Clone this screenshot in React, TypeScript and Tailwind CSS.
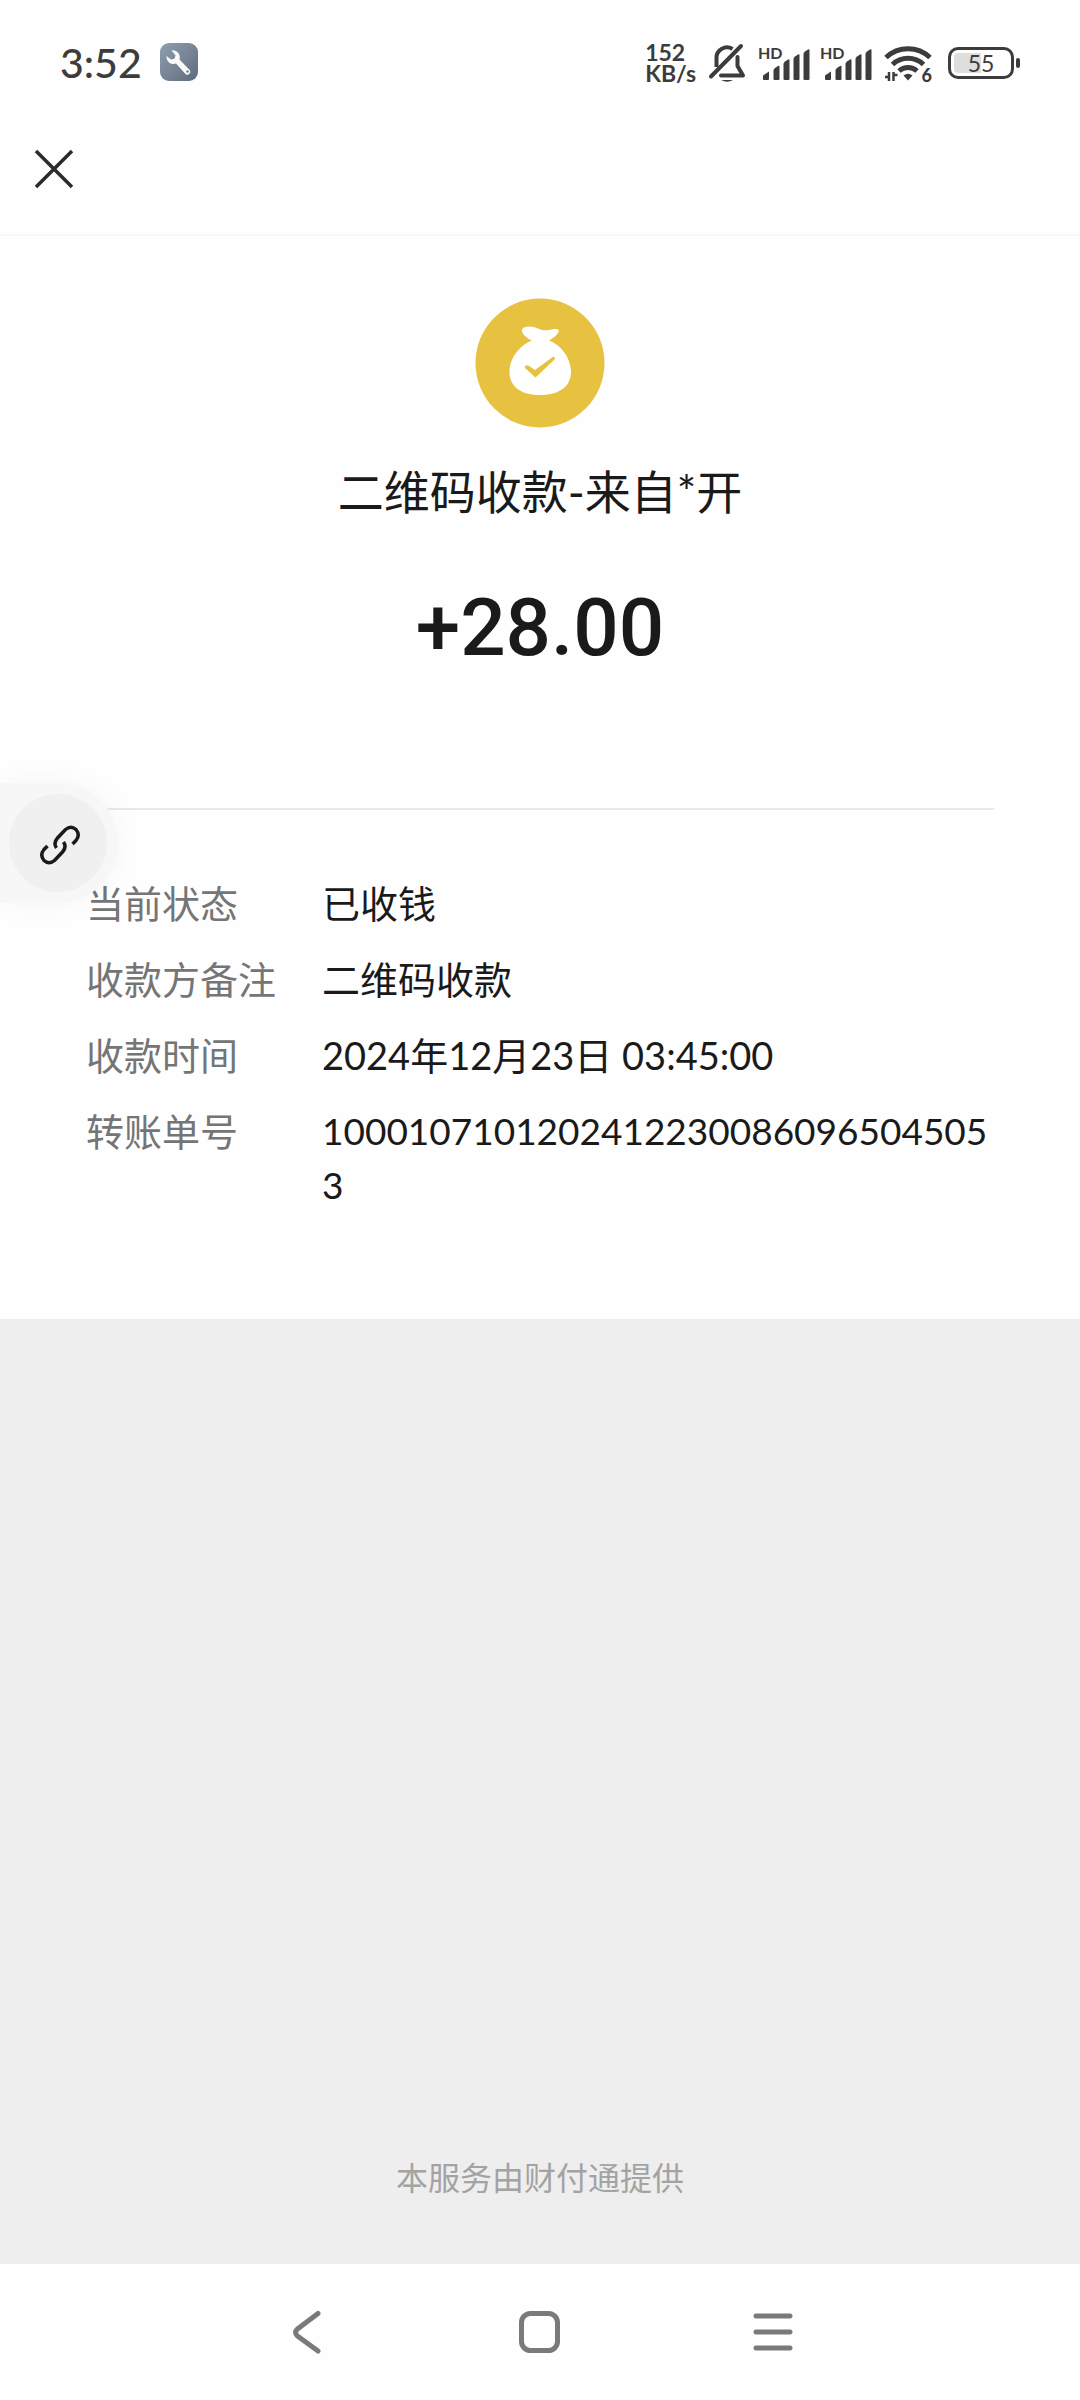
function SignalBars() {
  return (
    <div className="relative">
      <span className="absolute -top-px left-0 text-base leading-none font-bold">HD</span>
      <svg width="52" height="34" viewBox="1 0 52 34" fill="currentColor">
        <path d="M6 33v-3.500l6-4v7.500q0 1-1 1h-4q-1 0-1-1z" />
        <path d="M16.500 33v-8.500q0-1.500 1.500-2.500l3-2q1.500-.5 1.500 .5v12.500q0 1-1 1h-4q-1 0-1-1z" />
        <path d="M26.500 33v-15q0-1.500 1.500-2.500l3-2q1.500-.5 1.500 .5v19q0 1-1 1h-4q-1 0-1-1z" />
        <path d="M36.500 33v-20q0-1.500 1.500-2.500l3-2q1.500-.5 1.500 .5v24q0 1-1 1h-4q-1 0-1-1z" />
        <path d="M46.500 33v-25q0-1.500 1.500-2.500l3-2q1.500-.5 1.500 .5v29q0 1-1 1h-4q-1 0-1-1z" />
      </svg>
    </div>
  )
}

function StatusBar() {
  return (
    <div className="flex items-center justify-between pt-5 pr-15 pl-15 text-[#3c3c3c]">
      <div className="flex h-[84px] items-center gap-[18px]">
        <span className="text-[41px] leading-none font-medium">3:52</span>
        <svg width="38" height="38" viewBox="0 0 38 38">
          <defs>
            <linearGradient id="tool" x1="0" y1="0" x2="1" y2="1">
              <stop offset="0" stopColor="#8f9fae" />
              <stop offset="1" stopColor="#5f6b7d" />
            </linearGradient>
          </defs>
          <rect width="38" height="38" rx="9" fill="url(#tool)" />
          <path
            d="M11.500 7.500a7 7 0 0 1 8 9l10.200 10.500a3 3 0 0 1-4 4.300L16 20.500a7 7 0 0 1-9.500-7.500l4.500 3.500 3.500-.8 1-3.500z"
            fill="#fafafa"
          />
          <circle cx="27.500" cy="28.500" r="1.200" fill="#6b7788" />
        </svg>
      </div>
      <div className="flex items-center gap-3 pt-0.5">
        <p className="text-[23px] leading-[21px] font-bold">
          152
          <br />
          KB/s
        </p>
        <svg width="38" height="40" viewBox="0 0 38 40" fill="none" stroke="currentColor" strokeWidth="4" strokeLinecap="round">
          <path d="M8.500 24V15a10.500 10.500 0 0 1 16-9" strokeLinecap="butt" />
          <path d="M29.500 14v9l5.500 9.500H13" strokeLinejoin="round" />
          <path d="M33 3L3 33.500" />
          <path d="M13 37q6.500 3.500 12 0z" fill="currentColor" stroke="none" />
        </svg>
        <div className="flex gap-[10px]">
          <SignalBars />
          <SignalBars />
        </div>
        <div className="relative">
          <svg width="48" height="38" viewBox="0 0 48 38" fill="none" stroke="currentColor" strokeWidth="5">
            <path d="M2 13.500a32 32 0 0 1 44 0" />
            <path d="M8.500 20.500a22.500 22.500 0 0 1 31 0" />
            <path d="M15 27a13.500 13.500 0 0 1 18 0" />
            <path d="M19.500 31.500q4.500-3.500 9 0l-4.500 5z" fill="currentColor" stroke="none" />
            <path d="M1 33h4v-5M5 28v9M9.500 37v-9M9.500 31h4" strokeWidth="2.500" />
          </svg>
          <span className="absolute right-0 -bottom-0.5 text-lg leading-none font-black">6</span>
        </div>
        <div className="ml-1 flex items-center gap-0.5">
          <div className="flex h-8 w-[66px] items-center justify-center rounded-[10px] border-3 border-current bg-linear-to-r from-[#dedede] from-50% to-transparent to-50% bg-clip-content p-[3px] text-[23px] leading-none">
            55
          </div>
          <div className="h-[10px] w-1 rounded-sm bg-current" />
        </div>
      </div>
    </div>
  )
}

function MoneyBag() {
  return (
    <svg width="130" height="130" viewBox="0 0 130 130">
      <circle cx="65" cy="65" r="64.500" fill="#e6c240" />
      <path
        d="M57 42.500C51 40 46 35 47 31.500C48.500 27.500 58 28 63 30.500C69 33.500 74 32 79 31C83 30.500 85 32 83 35C81 38.500 77 40.500 74 42.500C86 47 96 60 96 74C96 90 82 97 65 97C48 97 34.500 90 34.500 74C34.500 60 45 47 57 42.500Z"
        fill="#fff"
      />
      <path d="M50 68.500q1.500-2 4-.5l6 4 17-12.500q2.500-1.500 3 .5 0 1-1 2L60.500 79.500 50 70q-.5-.8 0-1.500z" fill="#e6c240" />
    </svg>
  )
}

const rows = [
  { label: "当前状态", value: "已收钱" },
  { label: "收款方备注", value: "二维码收款" },
  { label: "收款时间", value: "2024年12月23日 03:45:00" },
]

export default function App() {
  return (
    <div className="relative flex min-h-screen flex-col bg-[#fefefe] font-['Lato','Noto_Sans_CJK_SC',sans-serif] text-[#1a1a1a]">
      <StatusBar />
      <header className="flex h-[132px] items-center border-b-2 border-[#f8f8f8] px-8">
        <button aria-label="关闭">
          <svg width="44" height="44" viewBox="0 0 44 44" stroke="#2b2b2b" strokeWidth="3.500">
            <path d="M4 4L40 40M40 4L4 40" />
          </svg>
        </button>
      </header>

      <main className="flex flex-1 flex-col">
        <section className="relative px-[86px] pt-[62px] pb-[107px]">
          <div className="flex flex-col items-center">
            <MoneyBag />
            <h1 className="mt-8 text-[46px] leading-16">二维码收款-来自*开</h1>
            <p className="mt-14 font-['Roboto'] text-[80px] leading-24 font-medium">+28.00</p>
          </div>
          <hr className="mt-[132px] border-t-2 border-[#e8e8e8]" />
          <dl className="mt-[66px] grid grid-cols-[236px_1fr] gap-y-[22px] text-[38px] leading-[54px]">
            {rows.map((row) => (
              <div key={row.label} className="contents">
                <dt className="text-[#757575]">{row.label}</dt>
                <dd>{row.value}</dd>
              </div>
            ))}
            <dt className="text-[#757575]">转账单号</dt>
            <dd className="text-[37px] break-all">10001071012024122300860965045053</dd>
          </dl>
          <button
            aria-label="链接"
            className="absolute top-[547px] left-0 flex h-[120px] w-[118px] items-center rounded-r-full bg-[#f7f7f7] pl-[9px] shadow-[0_0_32px_rgba(0,0,0,0.04)]"
          >
            <span className="flex size-[98px] items-center justify-center rounded-full bg-[#f0f0f0] pt-1 pl-1">
              <svg width="42" height="42" viewBox="0 0 42 42" fill="none" stroke="#1a1a1a" strokeWidth="3.500">
                <path d="M17.500 24q-3.500-5 1-10l8-8.500q5.500-4.500 10.500 0 4.500 5.500 0 11l-3.500 3.500" />
                <path d="M24.500 18q3.500 5-1 10l-8 8.500q-5.500 4.500-10.500 0-4.500-5.500 0-11l3.500-3.500" />
              </svg>
            </span>
          </button>
        </section>
        <footer className="flex flex-1 items-end justify-center bg-[#eeeeee] pb-16 text-[32px] leading-11 text-[#a3a3a3]">
          本服务由财付通提供
        </footer>
      </main>

      <nav className="flex h-[136px] items-center justify-center gap-[190px] text-[#7a7a7a]">
        <button aria-label="返回">
          <svg width="44" height="44" viewBox="0 0 44 44" fill="none" stroke="currentColor" strokeWidth="5" strokeLinecap="round">
            <path d="M34 3.500L13.500 19q-4 3.500 0 7L34 41" />
          </svg>
        </button>
        <button aria-label="主页">
          <svg width="44" height="44" viewBox="0 0 44 44" fill="none" stroke="currentColor" strokeWidth="5">
            <rect x="3.500" y="3.500" width="36" height="37" rx="9" />
          </svg>
        </button>
        <button aria-label="菜单">
          <svg width="44" height="44" viewBox="0 0 44 44" stroke="currentColor" strokeWidth="5" strokeLinecap="round">
            <path d="M4 6H38M4 22H38M4 38H38" />
          </svg>
        </button>
      </nav>
    </div>
  )
}
